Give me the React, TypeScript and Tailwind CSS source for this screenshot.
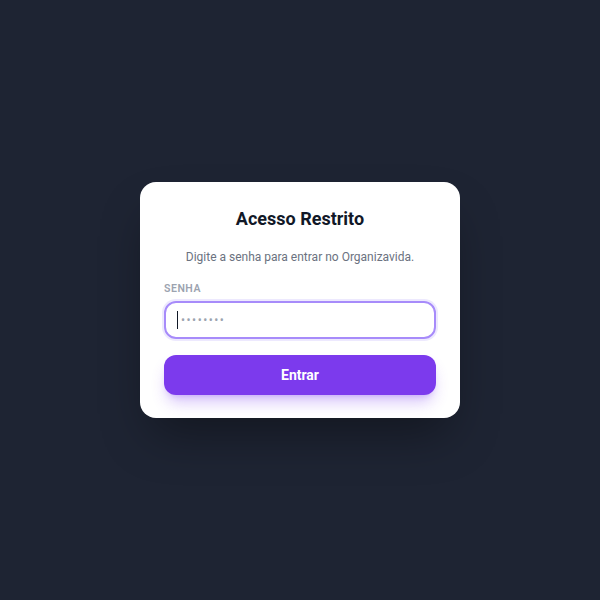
import { useState } from 'react';

export default function App() {
  const [senha, setSenha] = useState('');

  return (
    <div
      className="min-h-screen w-full bg-[#1e2433] flex items-center justify-center"
      style={{ fontFamily: 'Roboto, "Noto Sans", sans-serif' }}
    >
      <div className="w-80 bg-white rounded-2xl px-6 pt-6 pb-[23px] shadow-2xl shadow-black/40">
        <h1 className="text-[18px] leading-[26px] font-bold text-[#111827] text-center">Acesso Restrito</h1>
        <p className="mt-4 text-[12px] leading-[18px] text-[#6b7280] text-center">
          Digite a senha para entrar no Organizavida.
        </p>

        <label className="block mt-4 mb-[5px] text-[10.5px] leading-[14px] font-semibold tracking-wider text-[#9ca3af]">
          SENHA
        </label>
        <div className="relative">
          <input
            type="password"
            value={senha}
            onChange={(e) => setSenha(e.target.value)}
            placeholder="••••••••"
            className="w-full h-[38px] rounded-xl border-2 border-[#a78bfa] ring-2 ring-[#ede9fe] pl-[15px] pr-3 text-[12px] tracking-[1.5px] text-[#111827] placeholder:text-[#9ca3af] outline-none"
          />
          {senha === '' && (
            <span className="absolute left-[13px] top-[10px] w-px h-[18px] bg-[#111827] pointer-events-none" />
          )}
        </div>

        <button className="mt-4 w-full h-10 rounded-xl bg-[#7c3aed] text-white font-bold text-[14px] shadow-lg shadow-[#7c3aed]/30">
          Entrar
        </button>
      </div>
    </div>
  );
}
